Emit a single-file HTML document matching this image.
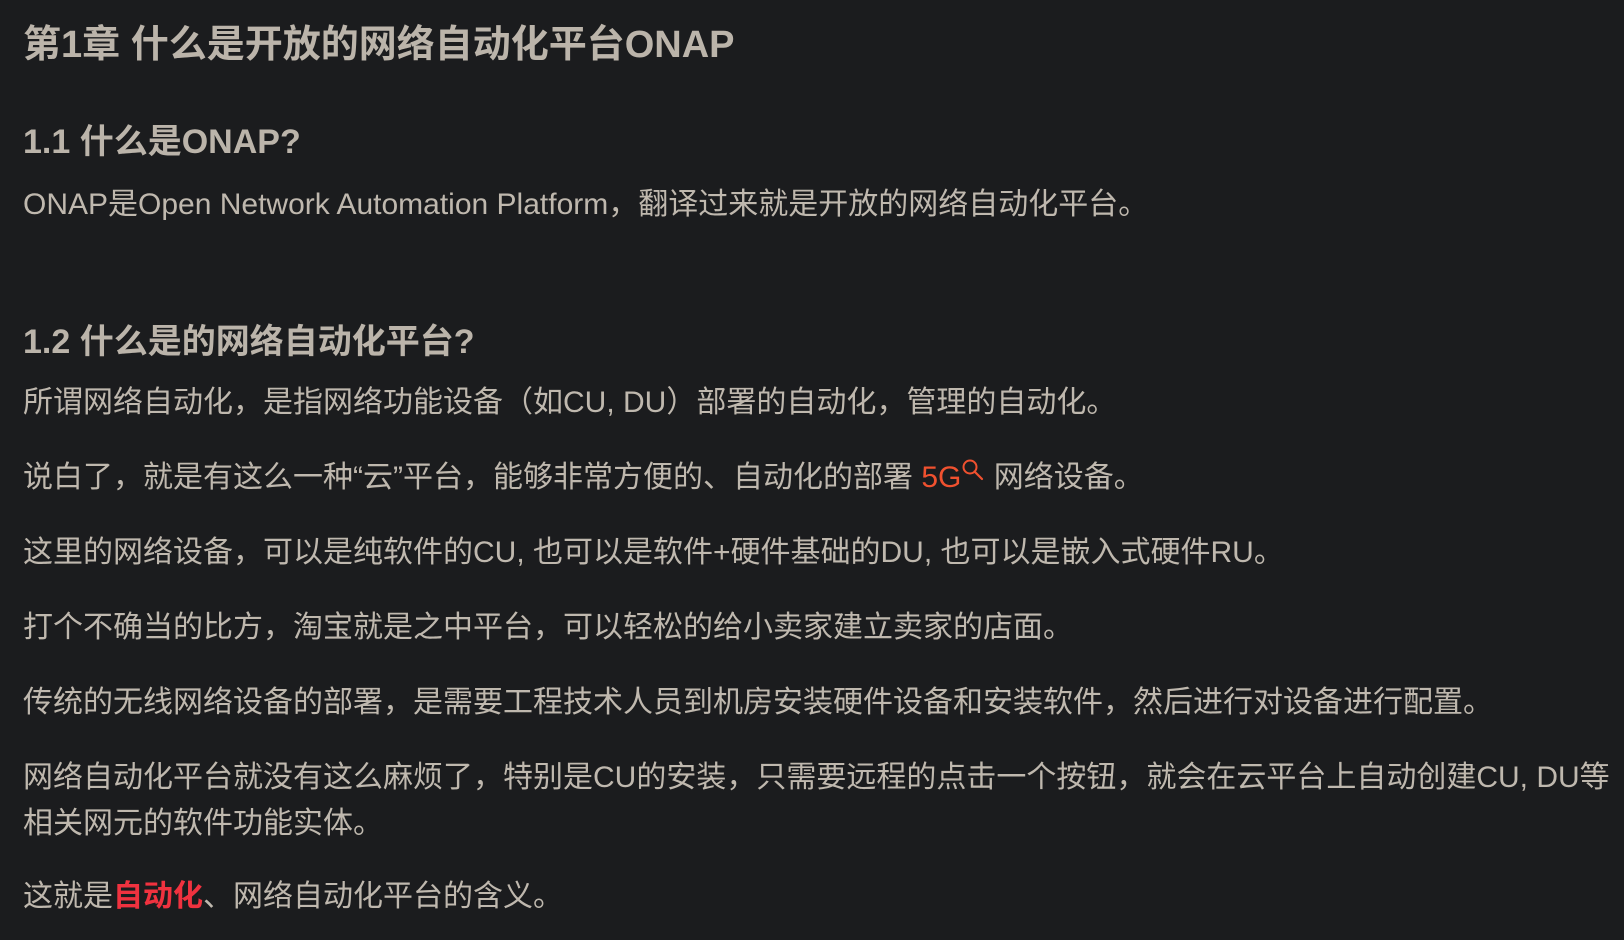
<!DOCTYPE html>
<html><head><meta charset="utf-8"><style>
html,body{margin:0;padding:0;background:#1b1c1e;}
body{width:1624px;height:940px;position:relative;overflow:hidden;font-family:"Liberation Sans","Noto Sans CJK SC",sans-serif;color:#bfb8ae;}
.l{position:absolute;left:23px;white-space:nowrap;height:40px;line-height:40px;font-size:30px;}
.h{font-weight:bold;font-size:34px;color:#bbb4aa;}
.t{font-weight:bold;font-size:38px;color:#bbb4aa;}
.r{color:#f0512f;}
.b{color:#f0323f;font-weight:bold;}
</style></head><body>
<div class="l t" style="top:25px">第1章 什么是开放的网络自动化平台ONAP</div>
<div class="l h" style="top:122px">1.1 什么是ONAP?</div>
<div class="l" style="top:185px">ONAP是Open Network Automation Platform，翻译过来就是开放的网络自动化平台。</div>
<div class="l h" style="top:322px">1.2 什么是的网络自动化平台?</div>
<div class="l" style="top:383px">所谓网络自动化，是指网络功能设备（如CU, DU）部署的自动化，管理的自动化。</div>
<div class="l" style="top:458px">说白了，就是有这么一种“云”平台，能够非常方便的、自动化的部署 <span class="r">5G</span><svg width="24" height="30" viewBox="0 0 24 30" style="vertical-align:top;margin-top:-1px"><circle cx="9" cy="10" r="6.5" fill="none" stroke="#f0512f" stroke-width="2"/><path d="M13.5 14.5 L21 22" stroke="#f0512f" stroke-width="2.2" stroke-linecap="round"/></svg> 网络设备。</div>
<div class="l" style="top:533px">这里的网络设备，可以是纯软件的CU, 也可以是软件+硬件基础的DU, 也可以是嵌入式硬件RU。</div>
<div class="l" style="top:608px">打个不确当的比方，淘宝就是之中平台，可以轻松的给小卖家建立卖家的店面。</div>
<div class="l" style="top:683px">传统的无线网络设备的部署，是需要工程技术人员到机房安装硬件设备和安装软件，然后进行对设备进行配置。</div>
<div class="l" style="top:758px">网络自动化平台就没有这么麻烦了，特别是CU的安装，只需要远程的点击一个按钮，就会在云平台上自动创建CU, DU等</div>
<div class="l" style="top:804px">相关网元的软件功能实体。</div>
<div class="l" style="top:877px">这就是<span class="b">自动化</span>、网络自动化平台的含义。</div>
</body></html>
